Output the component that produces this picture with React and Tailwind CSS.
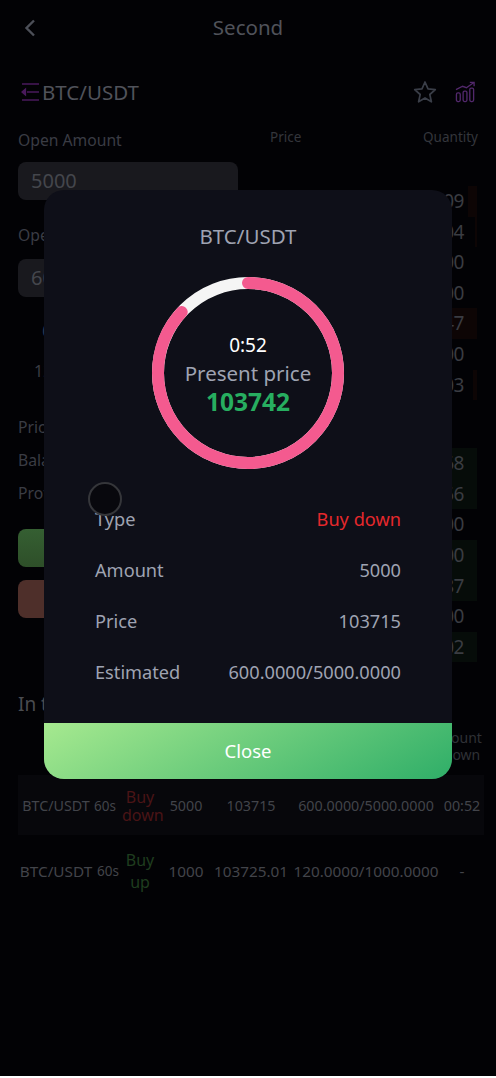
const font = { fontFamily: '"Noto Sans", "Open Sans", sans-serif' }

const asks = [
  { q: "0.00509", bar: 9 },
  { q: "0.01204", bar: 2 },
  { q: "0.00100", bar: 0 },
  { q: "0.00100", bar: 0 },
  { q: "0.24147", bar: 25 },
  { q: "0.00100", bar: 0 },
  { q: "0.01003", bar: 4 },
]

const bids = [
  { q: "1.20068", bar: 28 },
  { q: "1.20056", bar: 28 },
  { q: "0.00100", bar: 0 },
  { q: "0.90100", bar: 28 },
  { q: "0.90087", bar: 28 },
  { q: "0.00100", bar: 0 },
  { q: "0.70002", bar: 28 },
]

const trades = [
  { size: "text-[14.3px]", type: "Buy down", color: "text-[#4a1416] leading-[18px]", amount: "5000", price: "103715", est: "600.0000/5000.0000", count: "00:52", bg: "bg-[#07070b]", shift: "pr-[6px]" },
  { size: "text-[15.3px]", type: "Buy up", color: "text-[#1f3d1f] leading-[22px]", amount: "1000", price: "103725.01", est: "120.0000/1000.0000", count: "-", bg: "", shift: "" },
]

function BookRow({ row, barColor }) {
  return (
    <div className="relative h-[30.6px] mr-[1px] flex items-center justify-end pr-[13px]">
      {row.bar > 0 && <div className={`absolute right-0 top-0 bottom-0 ${barColor}`} style={{ width: row.bar }} />}
      <span className="relative text-[19px] tracking-[-0.5px] text-[#3a3c42]">{row.q}</span>
    </div>
  )
}

function TradeRow({ t }) {
  return (
    <div className={`grid grid-cols-[76px_28px_36px_56px_74px_156px_36px] items-center h-[60px] pt-[2px] text-[#42444a] ${t.bg}`}>
      <span className={`flex justify-center whitespace-nowrap ${t.size}`}>BTC/USDT</span>
      <span className={`flex justify-center text-[13.5px] ${t.shift}`}>60s</span>
      <span className={`text-center text-[16px] ${t.color}`}>{t.type}</span>
      <span className={`flex justify-center ${t.size}`}>{t.amount}</span>
      <span className={`flex justify-center whitespace-nowrap ${t.size}`}>{t.price}</span>
      <span className={`flex justify-center whitespace-nowrap ${t.size}`}>{t.est}</span>
      <span className={`flex justify-center ${t.size}`}>{t.count}</span>
    </div>
  )
}

function InfoRow({ label, value, color = "text-[#9fa3b2]" }) {
  return (
    <div className="flex items-center justify-between h-[51px] text-[18.2px] text-[#9fa3b2]">
      <span>{label}</span>
      <span className={color}>{value}</span>
    </div>
  )
}

function Modal() {
  const total = 2 * Math.PI * 90
  return (
    <div className="absolute left-[44px] top-[190px] w-[408px] h-[589px] flex flex-col rounded-[20px] overflow-hidden bg-[#0e0f18]">
      <div className="flex justify-center items-center h-[92px] text-[20.5px] text-[#9fa3b2]">BTC/USDT</div>
      <div className="relative self-center w-[192px] h-[192px] -mt-[5px]">
        <svg width="192" height="192" viewBox="0 0 192 192" fill="none" className="-rotate-90">
          <circle cx="96" cy="96" r="90" stroke="#f5f5f5" strokeWidth="12" />
          <circle cx="96" cy="96" r="90" stroke="#f45a8f" strokeWidth="12" strokeLinecap="round" strokeDasharray={`${total * 0.867} ${total}`} />
        </svg>
        <div className="absolute inset-0 flex flex-col items-center justify-center pt-[1px]">
          <div className="text-[19px] leading-[28px] text-white">0:52</div>
          <div className="text-[20.5px] leading-[28px] text-[#9fa3b2]">Present price</div>
          <div className="text-[24.5px] leading-[30px] font-bold text-[#27ae60]">103742</div>
        </div>
      </div>
      <div className="flex-1 pt-[25px] px-[51px]">
        <InfoRow label="Type" value="Buy down" color="text-[#e5282c]" />
        <InfoRow label="Amount" value="5000" />
        <InfoRow label="Price" value="103715" />
        <InfoRow label="Estimated" value="600.0000/5000.0000" />
      </div>
      <div className="h-[56px] flex items-center justify-center text-[18.5px] text-white bg-[linear-gradient(150deg,#a6e98f,#2fae68)]">Close</div>
    </div>
  )
}

export default function App() {
  return (
    <div style={font} className="relative h-[1076px] w-[496px] overflow-hidden bg-[#020205]">
      <div className="relative flex items-center justify-center h-14 pb-[1px]">
        <svg className="absolute left-[22px] top-[18px]" width="16" height="20" viewBox="0 0 16 20" fill="none" stroke="#4c4f58" strokeWidth="2.4">
          <path d="M12 2.5 4.5 10l7.5 7.5" />
        </svg>
        <span className="text-[20.5px] text-[#50525a]">Second</span>
      </div>

      <div className="flex items-center h-[72px] px-[20px]">
        <svg width="20" height="18" viewBox="0 0 20 18" fill="none" stroke="#4a1a5c" strokeWidth="1.3">
          <path d="M2 1h17M7 9h12M2 17h17" />
          <path d="M5.5 6 2 9l3.5 3z" fill="#4a1a5c" />
        </svg>
        <span className="text-[20.5px] text-[#50525a] ml-[2px] pt-[1px]">BTC/USDT</span>
        <svg className="ml-auto" width="24" height="24" viewBox="0 0 24 24" fill="none" stroke="#3a3e48" strokeWidth="1.7" strokeLinejoin="round">
          <path d="m12 2 3 6.9 7.3.7-5.5 4.9 1.6 7.3L12 17.9l-6.4 3.9 1.6-7.3-5.5-4.9L9 8.9z" />
        </svg>
        <svg className="ml-[18px]" width="21" height="22" viewBox="0 0 22 22" fill="none" stroke="#52286c" strokeWidth="1.4">
          <rect x="1.5" y="12" width="4" height="9" rx="1.5" />
          <rect x="8.5" y="10" width="4" height="11" rx="1.5" />
          <rect x="15.5" y="7" width="4" height="14" rx="1.5" />
          <path d="M1 8.5 8 5l4 1.5L19 1.5M15.5 1H20v4" />
        </svg>
      </div>

      <div className="flex h-[536px] pl-[18px] pr-[18px]">
        <div className="w-[220px] text-[#3a3c44]">
          <div className="h-6 pt-[2px] flex items-center text-[15.7px]">Open Amount</div>
          <div className="mt-[10px] h-[38px] flex items-center px-[13px] rounded-[8px] bg-[#19191e] text-[20px] text-[#44464c]">5000</div>
          <div className="mt-[23px] h-6 pt-[2px] flex items-center text-[15.7px]">Open Time</div>
          <div className="mt-[12px] h-[38px] flex items-center px-[13px] rounded-[8px] bg-[#19191e] text-[20px] text-[#44464c]">60</div>
          <div className="mt-[13px] h-[40px] flex items-center pl-[24px] text-[18px] text-[#2a3a52]">60s</div>
          <div className="mt-[9px] h-6 flex items-center pl-[16px] text-[16px] text-[#3a3c44]">12%</div>
          <div className="mt-[32px] h-6 pt-[2px] flex items-center text-[15.7px]">Price</div>
          <div className="mt-[9px] h-6 pt-[2px] flex items-center text-[15.7px]">Balance</div>
          <div className="mt-[9px] h-6 pt-[2px] flex items-center text-[15.7px]">Profit</div>
          <div className="mt-[24px] h-[38px] rounded-[8px] bg-[linear-gradient(180deg,#355f32,#2e4f29)]" />
          <div className="mt-[13px] h-[38px] rounded-[8px] bg-[#4e2f2a]" />
        </div>
        <div className="flex-1 ml-[12px] flex flex-col">
          <div className="flex justify-between h-[18px] items-center pl-[20px] text-[13.5px] text-[#34363c]">
            <span>Price</span>
            <span>Quantity</span>
          </div>
          <div className="mt-[40px]">
            {asks.map((row, i) => <BookRow key={i} row={row} barColor="bg-[#0d0505]" />)}
          </div>
          <div className="mt-[48px]">
            {bids.map((row, i) => <BookRow key={i} row={row} barColor="bg-[#060c09]" />)}
          </div>
        </div>
      </div>

      <div className="mt-[28px] pl-[18px] pr-[12px]">
        <div className="h-6 flex items-center text-[19px] text-[#4a4c50]">In transaction</div>
        <div className="mt-[11px] flex justify-end pr-[6px] h-[37px] items-center text-[14px] leading-[17px] text-[#2f3136]">
          <span className="flex flex-col items-center w-[32px] whitespace-nowrap">
            <span>Count</span>
            <span>down</span>
          </span>
        </div>
        <div className="mt-[11px] flex flex-col gap-[5px]">
          {trades.map((t, i) => <TradeRow key={i} t={t} />)}
        </div>
      </div>

      <Modal />
      {/* touch indicator sitting over the dialog */}
      <div className="absolute left-[88px] top-[482px] w-[34px] h-[34px] rounded-full border-2 border-[#35363a] bg-[#08080d]" />
    </div>
  )
}
